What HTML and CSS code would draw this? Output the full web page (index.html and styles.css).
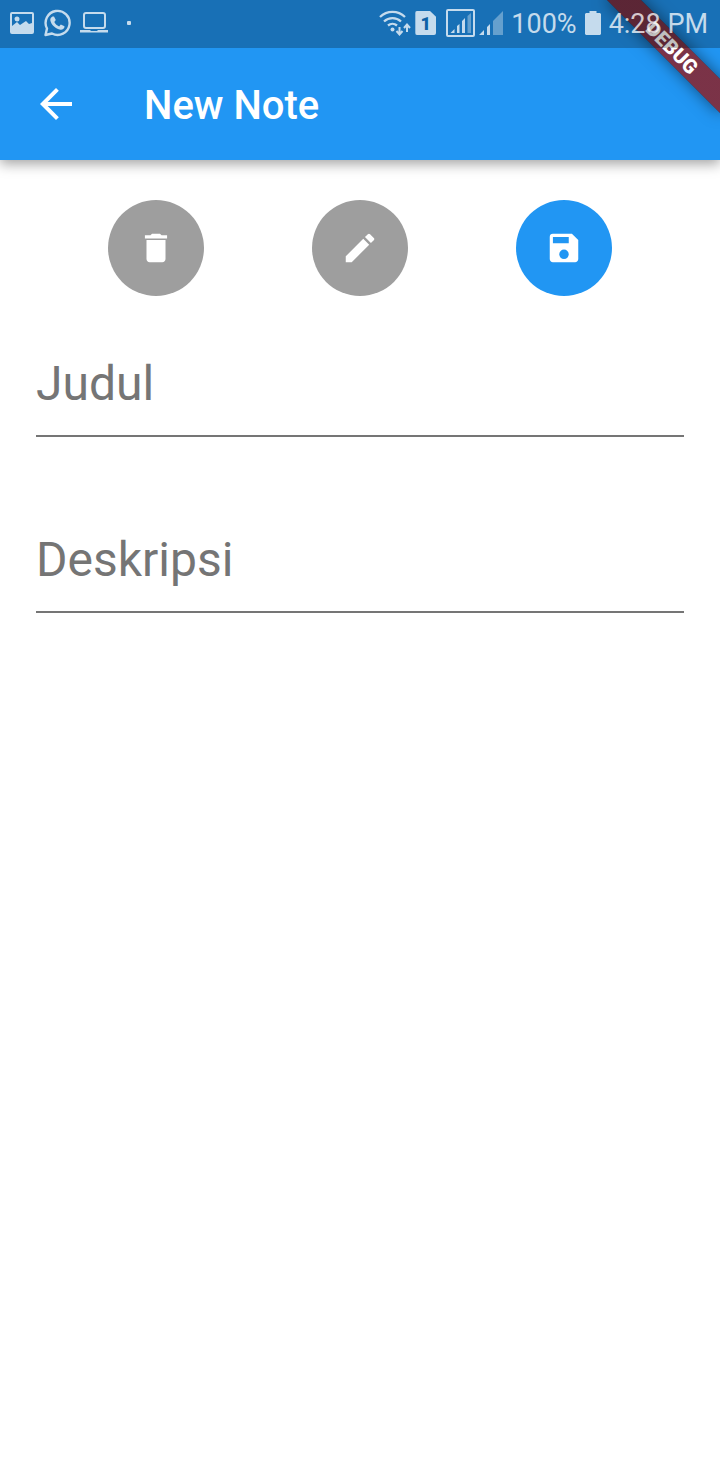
FILE: index.html
```html
<!DOCTYPE html>
<html lang="id">
<head>
<meta charset="utf-8">
<meta name="viewport" content="width=device-width, initial-scale=1">
<title>New Note</title>
<link rel="stylesheet" href="styles.css">
</head>
<body>
<div class="page">
  <header class="header">
    <div class="status">
      <div class="status-notifications">
        <svg width="24" height="22" viewBox="0 0 24 22" aria-hidden="true"><path fill="currentColor" fill-rule="evenodd" d="M2 0h20a2 2 0 0 1 2 2v18a2 2 0 0 1-2 2H2a2 2 0 0 1-2-2V2a2 2 0 0 1 2-2zM2 2v12l5-4 3 3 6-4 3 3 3-1V2zM7 4.500a2.500 2.500 0 1 1 0 5 2.500 2.500 0 0 1 0-5z"/></svg>
        <svg width="28" height="28" viewBox="0 0 28 28" aria-hidden="true"><path fill="none" stroke="currentColor" stroke-width="2.400" stroke-linejoin="round" d="M2.500 26l1.500-6.500A12 12 0 1 1 9 24.500z"/><path fill="currentColor" d="M9.500 7.500h1.500l1.800 3.600-1.500 2c1.200 2.200 2.600 3.400 4.800 4.300l1.700-1.900 3.700 1.800c.2 2.400-2 3.700-4 3.500C12.500 20.200 8 15.500 7.300 11.300c-.1-1.700.7-3.100 2.200-3.800z"/></svg>
        <svg width="28" height="22" viewBox="0 0 28 22" aria-hidden="true"><rect x="4" y="1" width="21" height="15" rx="2" fill="none" stroke="currentColor" stroke-width="2"/><path fill="currentColor" d="M0 18h10l1 1h6l1-1h10v2.500H0z"/></svg>
        <span class="status-dot"></span>
      </div>
      <div class="status-system">
        <svg class="wifi" width="32" height="26" viewBox="0 0 32 26" aria-hidden="true"><g fill="none" stroke="currentColor" stroke-width="2.300"><path d="M1 7a18 18 0 0 1 25 0M5 11.500a12.500 12.500 0 0 1 17 0M9 15.500a7 7 0 0 1 9 0"/><path stroke-width="2" d="M20.500 17v7M17.500 21l3 3.500 3-3.500M28 22v-7M25 18l3-3.500 3 3.500"/></g><circle cx="13.500" cy="19.500" r="2" fill="currentColor"/></svg>
        <span class="sim">1</span>
        <svg class="signal-box" width="29" height="28" viewBox="0 0 29 28" aria-hidden="true"><rect x="1" y="1" width="27" height="26" rx="1" fill="none" stroke="currentColor" stroke-width="2"/><path fill="currentColor" d="M4.500 24l4-4v4zM11 17l2.500-2v9H11zM16 12l3-3v15h-3z"/><path fill="currentColor" opacity=".45" d="M21.500 7L25 4v20h-3.500z"/></svg>
        <svg class="signal" width="24" height="25" viewBox="0 0 24 25" aria-hidden="true"><path fill="currentColor" d="M0 24l5-5v5zM8 16l3-3v11H8z"/><path fill="currentColor" opacity=".45" d="M14 10l10-10v24H14z"/></svg>
        <span>100%</span>
        <svg width="16" height="24" viewBox="0 0 16 24" aria-hidden="true"><path fill="currentColor" d="M4.500 0h7v2H15l1 1v20l-1 1H1l-1-1V3l1-1h3.500z"/></svg>
        <time>4:28 PM</time>
      </div>
    </div>
    <div class="appbar">
      <button class="back" type="button" aria-label="Back">
        <svg width="48" height="48" viewBox="0 0 24 24" aria-hidden="true"><path fill="currentColor" d="M20 11H7.830l5.590-5.590L12 4l-8 8 8 8 1.410-1.410L7.830 13H20z"/></svg>
      </button>
      <h1 class="title">New Note</h1>
    </div>
  </header>
  <div class="debug">DEBUG</div>
  <main>
    <div class="actions">
      <button class="action" type="button" aria-label="Delete">
        <svg width="38" height="38" viewBox="0 0 24 24" aria-hidden="true"><path fill="currentColor" d="M6 19c0 1.100.9 2 2 2h8c1.100 0 2-.9 2-2V7H6zM19 4h-3.500l-1-1h-5l-1 1H5v2h14z"/></svg>
      </button>
      <button class="action" type="button" aria-label="Edit">
        <svg width="38" height="38" viewBox="0 0 24 24" aria-hidden="true"><path fill="currentColor" d="M3 17.250V21h3.750L17.810 9.940l-3.750-3.750zM20.710 7.040a1 1 0 0 0 0-1.410l-2.340-2.340a1 1 0 0 0-1.410 0l-1.830 1.830 3.750 3.750z"/></svg>
      </button>
      <button class="action action-save" type="button" aria-label="Save">
        <svg width="38" height="38" viewBox="0 0 24 24" aria-hidden="true"><path fill="currentColor" d="M17 3H5a2 2 0 0 0-2 2v14c0 1.100.9 2 2 2h14c1.100 0 2-.9 2-2V7zm-5 16a3 3 0 1 1 0-6 3 3 0 0 1 0 6zm3-10H5V5h10z"/></svg>
      </button>
    </div>
    <form class="form">
      <input class="field" type="text" name="judul" placeholder="Judul" aria-label="Judul">
      <input class="field" type="text" name="deskripsi" placeholder="Deskripsi" aria-label="Deskripsi">
    </form>
  </main>
</div>
</body>
</html>
```
FILE: styles.css
```css
* {
  box-sizing: border-box;
}

body {
  margin: 0;
  background: #fff;
  font-family: Roboto, "Liberation Sans", sans-serif;
}

.page {
  position: relative;
  min-height: 100vh;
  overflow: hidden;
}

svg {
  display: block;
  flex: none;
}

button {
  display: flex;
  align-items: center;
  justify-content: center;
  padding: 0;
  border: 0;
  background: none;
  color: #fff;
}

.header {
  background: #2196f3;
  color: #fff;
  box-shadow: 0 4px 12px rgba(0, 0, 0, 0.36);
}

/* The system bar tints everything under it, the debug ribbon included. */
.status {
  position: relative;
  z-index: 2;
  display: flex;
  align-items: center;
  justify-content: space-between;
  height: 48px;
  padding: 0 12px 2px 10px;
  background: rgba(0, 0, 0, 0.25);
  color: rgba(255, 255, 255, 0.75);
  font-size: 27px;
  line-height: 32px;
  white-space: nowrap;
}

.status-notifications,
.status-system {
  display: flex;
  align-items: center;
}

.status-notifications {
  gap: 9px;
}

.status-dot {
  width: 4px;
  height: 4px;
  margin-left: 10px;
  border-radius: 1px;
  background: currentColor;
}

.status-system {
  gap: 8px;
}

.status-system span,
.status-system time {
  padding-top: 2px;
}

.wifi {
  margin-right: -4px;
}

.status-system .sim {
  width: 21px;
  height: 24px;
  margin-right: 2px;
  padding: 0;
  background: #fff;
  opacity: 0.75;
  border-radius: 2px;
  clip-path: polygon(0 0, 70% 0, 100% 25%, 100% 100%, 0 100%);
  color: #0a5ca0;
  font-size: 18px;
  font-weight: 900;
  line-height: 25px;
  text-align: center;
}

.signal-box {
  margin-right: -4px;
}

.appbar {
  display: flex;
  align-items: center;
  gap: 32px;
  height: 112px;
}

.back {
  width: 112px;
  height: 112px;
}

.title {
  margin: 0;
  padding-top: 3px;
  font-size: 40px;
  font-weight: 500;
  line-height: 48px;
}

.debug {
  position: absolute;
  z-index: 1;
  top: 36px;
  right: -32px;
  width: 160px;
  height: 24px;
  background: linear-gradient(rgba(183, 28, 28, 0.63), rgba(183, 28, 28, 0.63)), rgba(0, 0, 0, 0.4);
  box-shadow: 0 0 16px rgba(0, 0, 0, 0.5);
  color: #fff;
  font-size: 20px;
  font-weight: 900;
  line-height: 24px;
  text-align: center;
  transform: rotate(45deg);
}

.actions {
  display: flex;
  justify-content: space-evenly;
  padding-top: 40px;
}

.action {
  width: 96px;
  height: 96px;
  border-radius: 50%;
  background: #9e9e9e;
}

.action-save {
  background: #2196f3;
}

.form {
  display: flex;
  flex-direction: column;
  gap: 70px;
  padding: 35px 36px;
}

.field {
  width: 100%;
  padding: 25px 0 23px;
  border: 0;
  border-bottom: 2px solid #757575;
  border-radius: 0;
  outline: 0;
  background: none;
  color: #212121;
  font: 400 48px/56px Roboto, "Liberation Sans", sans-serif;
}

.field::placeholder {
  color: #757575;
  opacity: 1;
}
```
